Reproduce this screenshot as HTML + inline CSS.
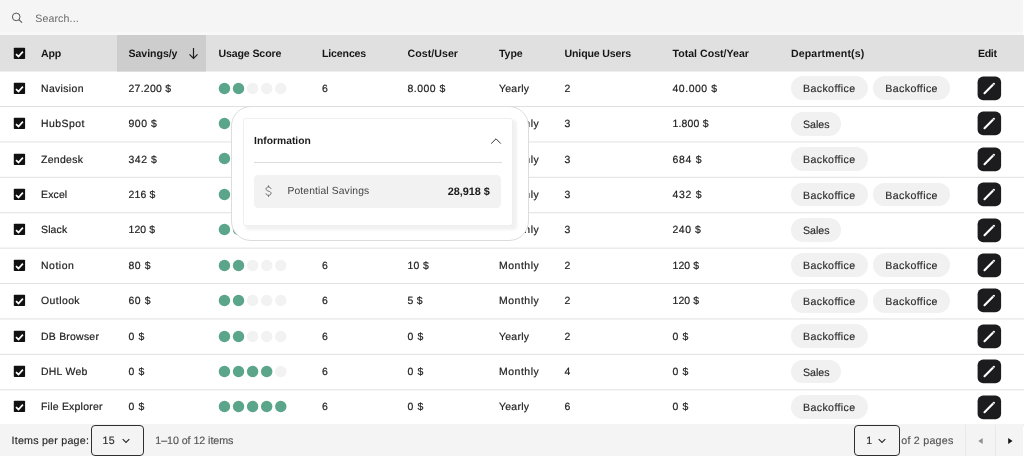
<!DOCTYPE html><html><head><meta charset="utf-8"><title>Apps</title><style>
*{box-sizing:border-box;margin:0;padding:0}
html,body{width:1025px;height:456px;overflow:hidden;background:#fff}
#root{position:absolute;left:0;top:0;width:1025px;height:456px;overflow:hidden;will-change:transform;text-rendering:geometricPrecision;background:#fff}
body{font-family:"Liberation Sans",sans-serif;font-size:10.45px;letter-spacing:0.32px;color:#1c1c1c;position:relative}
.abs{position:absolute;white-space:nowrap}
.search{left:0;top:0;width:1023px;height:35.3px;background:linear-gradient(#f5f5f5 0,#f5f5f5 31.5px,#f8f8f8 32.5px,#f8f8f8 100%)}
.search .ph{left:35.2px;top:1px;height:35.3px;line-height:36.3px;color:#6a6a6a;font-size:10.6px}
.hdr{left:0;top:35.3px;width:1024px;height:35.31px;background:#e0e0e0}
.hdr .sorted{left:117px;top:0;width:89px;height:35.31px;background:#cdcdcd}
.th{top:1px;height:35.31px;line-height:36.31px;font-weight:700;font-size:10.6px;letter-spacing:0.16px;color:#161616}
.row{left:0;width:1025px;height:35.41px;background:transparent}
.td{top:1.1px;height:35.4px;line-height:36px;color:#222;-webkit-text-stroke:0.2px #222}
.cb{left:13px;width:14px;height:14px}
.cb svg{position:absolute;left:0;top:0;width:14px;height:14px}
.dots{left:218px;top:11.9px;height:12px}
.dot{position:absolute;top:0;width:11.6px;height:11.6px;border-radius:50%;background:#f1f1f1}
.dot.on{background:#5aa389}
.tag{top:5.65px;height:23.9px;line-height:27.7px;border-radius:12px;background:#f1f1f1;color:#2b2b2b;-webkit-text-stroke:0.15px #2b2b2b;padding:0 0 0 12px;font-size:10.6px}
.edit{left:977px;top:5.35px;width:26px;height:26px}
.edit svg{position:absolute;left:0;top:0;width:26px;height:26px}
.pag{left:0;top:424px;width:1023px;height:32px;background:#f4f4f4;color:#333}
.pag .t{top:1px;height:32px;line-height:33.4px;font-size:10.7px;letter-spacing:0.3px;color:#2a2a2a;-webkit-text-stroke:0.15px currentColor}
.sel{top:1.4px;height:30.2px;border:1.2px solid #2f2f2f;border-radius:4px;background:#f4f4f4}
.vline{top:1px;width:1px;height:31px;background:#e9e9e9}
.pop{left:231px;top:106px;width:297.5px;height:135.3px;border-radius:20px;background:#fff;border:1.6px solid #dcdcdc}
.card{left:242.5px;top:118px;width:270.5px;height:108px;background:#fff;border-radius:3px;border:1px solid #efefef;box-shadow:3px 3px 2.5px 1px rgba(0,0,0,0.055)}
.card .ttl{left:10.6px;top:14px;line-height:18px;font-weight:700;font-size:10.3px;color:#1a1a1a}
.card .hr{left:10.6px;top:43px;width:248px;height:1px;background:#dcdcdc}
.card .box{left:10.5px;top:56.3px;width:246.8px;height:32.8px;background:#f2f2f2;border-radius:4.5px}
.card .lbl{left:44px;top:56px;height:33px;line-height:33px;font-size:10.3px;color:#444}
.card .val{right:22.1px;top:57px;height:33px;line-height:33px;font-size:10.9px;font-weight:700;color:#1a1a1a}
</style></head><body><div id="root">
<div class="abs search"><svg class="abs" style="left:11px;top:11.8px;width:12px;height:12px" viewBox="0 0 12 12"><circle cx="5.2" cy="4.9" r="3.8" fill="none" stroke="#555" stroke-width="1"/><path d="M7.9 7.6 L11 10.7" stroke="#555" stroke-width="1.1"/></svg><div class="abs ph"><span style="letter-spacing:0.137px">Search...</span></div></div>
<div class="abs" style="left:0;top:71px;width:1024px;height:1px;background:rgba(224,224,224,0.5)"></div><div class="abs" style="left:117px;top:71px;width:89px;height:1px;background:rgba(205,205,205,0.5)"></div>
<div class="abs hdr"><div class="abs sorted"></div>
<div class="abs cb" style="top:11.5px"><svg viewBox="0 0 14 14"><rect x="0.8" y="0.8" width="11.3" height="11.3" rx="0.8" fill="#111"/><path d="M3 7.2 L5.5 9.5 L9.9 4.6" fill="none" stroke="#fff" stroke-width="1.7" stroke-linecap="butt" stroke-linejoin="miter"/></svg></div>
<div class="abs th" style="left:41px"><span style="letter-spacing:-0.197px">App</span></div>
<div class="abs th" style="left:128.5px"><span style="letter-spacing:-0.059px">Savings/y</span></div>
<div class="abs th" style="left:218.4px"><span style="letter-spacing:-0.119px">Usage Score</span></div>
<div class="abs th" style="left:322px"><span style="letter-spacing:-0.158px">Licences</span></div>
<div class="abs th" style="left:407.5px"><span style="letter-spacing:0.057px">Cost/User</span></div>
<div class="abs th" style="left:499px"><span style="letter-spacing:-0.068px">Type</span></div>
<div class="abs th" style="left:564.5px"><span style="letter-spacing:-0.141px">Unique Users</span></div>
<div class="abs th" style="left:672.5px"><span style="letter-spacing:0.011px">Total Cost/Year</span></div>
<div class="abs th" style="left:791px"><span style="letter-spacing:0.118px">Department(s)</span></div>
<div class="abs th" style="left:978px"><span style="letter-spacing:-0.339px">Edit</span></div>
<svg class="abs" style="left:187px;top:11.8px;width:13px;height:13px" viewBox="0 0 13 13"><path d="M6.5 1.1 V11.2 M2.5 7.3 L6.5 11.3 L10.5 7.3" fill="none" stroke="#1e1e1e" stroke-width="1.2"/></svg>
</div>
<div class="abs" style="left:0px;top:106px;width:1024px;height:1px;background:rgba(224,224,224,1.00)"></div>
<div class="abs" style="left:0px;top:141px;width:1024px;height:1px;background:rgba(224,224,224,0.59)"></div><div class="abs" style="left:0px;top:142px;width:1024px;height:1px;background:rgba(224,224,224,0.41)"></div>
<div class="abs" style="left:0px;top:176px;width:1024px;height:1px;background:rgba(224,224,224,0.18)"></div><div class="abs" style="left:0px;top:177px;width:1024px;height:1px;background:rgba(224,224,224,0.82)"></div>
<div class="abs" style="left:0px;top:212px;width:1024px;height:1px;background:rgba(224,224,224,0.77)"></div><div class="abs" style="left:0px;top:213px;width:1024px;height:1px;background:rgba(224,224,224,0.23)"></div>
<div class="abs" style="left:0px;top:247px;width:1024px;height:1px;background:rgba(224,224,224,0.36)"></div><div class="abs" style="left:0px;top:248px;width:1024px;height:1px;background:rgba(224,224,224,0.64)"></div>
<div class="abs" style="left:0px;top:283px;width:1024px;height:1px;background:rgba(224,224,224,0.95)"></div><div class="abs" style="left:0px;top:284px;width:1024px;height:1px;background:rgba(224,224,224,0.05)"></div>
<div class="abs" style="left:0px;top:318px;width:1024px;height:1px;background:rgba(224,224,224,0.54)"></div><div class="abs" style="left:0px;top:319px;width:1024px;height:1px;background:rgba(224,224,224,0.46)"></div>
<div class="abs" style="left:0px;top:353px;width:1024px;height:1px;background:rgba(224,224,224,0.13)"></div><div class="abs" style="left:0px;top:354px;width:1024px;height:1px;background:rgba(224,224,224,0.87)"></div>
<div class="abs" style="left:0px;top:389px;width:1024px;height:1px;background:rgba(224,224,224,0.72)"></div><div class="abs" style="left:0px;top:390px;width:1024px;height:1px;background:rgba(224,224,224,0.28)"></div>
<div class="abs" style="left:0px;top:424px;width:1024px;height:1px;background:rgba(224,224,224,0.31)"></div><div class="abs" style="left:0px;top:425px;width:1024px;height:1px;background:rgba(224,224,224,0.69)"></div>
<div class="abs row" style="top:70.65px">
<div class="abs cb" style="top:11.15px"><svg viewBox="0 0 14 14"><rect x="0.8" y="0.8" width="11.3" height="11.3" rx="0.8" fill="#111"/><path d="M3 7.2 L5.5 9.5 L9.9 4.6" fill="none" stroke="#fff" stroke-width="1.7" stroke-linecap="butt" stroke-linejoin="miter"/></svg></div>
<div class="abs td" style="left:41px"><span style="letter-spacing:0.353px">Navision</span></div>
<div class="abs td" style="left:128.5px"><span style="letter-spacing:0.266px">27.200 $</span></div>
<svg class="abs" style="left:218px;top:11px;width:72px;height:14px" viewBox="0 0 72 14"><circle cx="6.45" cy="6.55" r="5.7" fill="#5ba58a"/><circle cx="20.53" cy="6.55" r="5.7" fill="#5ba58a"/><circle cx="34.61" cy="6.55" r="5.7" fill="#f2f2f2"/><circle cx="48.69" cy="6.55" r="5.7" fill="#f2f2f2"/><circle cx="62.77" cy="6.55" r="5.7" fill="#f2f2f2"/></svg>
<div class="abs td" style="left:322px"><span style="letter-spacing:0.320px">6</span></div>
<div class="abs td" style="left:407.5px"><span style="letter-spacing:0.487px">8.000 $</span></div>
<div class="abs td" style="left:499px"><span style="letter-spacing:0.272px">Yearly</span></div>
<div class="abs td" style="left:564.5px"><span style="letter-spacing:0.320px">2</span></div>
<div class="abs td" style="left:672.5px"><span style="letter-spacing:0.551px">40.000 $</span></div>
<div class="abs tag" style="left:791px;width:76.9px"><span style="letter-spacing:0.390px">Backoffice</span></div>
<div class="abs tag" style="left:873.3px;width:76.9px"><span style="letter-spacing:0.390px">Backoffice</span></div>
<div class="abs edit"><svg viewBox="0 0 26 26"><rect x="0.6" y="0.55" width="23.5" height="23.7" rx="5.6" fill="#1c1c1e"/><path d="M7.5 17.25 L16.9 7.85" fill="none" stroke="#fff" stroke-width="2.1" stroke-linecap="round"/><path d="M15.2 7.45 L17.4 9.65" stroke="#1c1c1e" stroke-width="0.5"/></svg></div>
</div>
<div class="abs row" style="top:106.06px">
<div class="abs cb" style="top:11.15px"><svg viewBox="0 0 14 14"><rect x="0.8" y="0.8" width="11.3" height="11.3" rx="0.8" fill="#111"/><path d="M3 7.2 L5.5 9.5 L9.9 4.6" fill="none" stroke="#fff" stroke-width="1.7" stroke-linecap="butt" stroke-linejoin="miter"/></svg></div>
<div class="abs td" style="left:41px"><span style="letter-spacing:0.446px">HubSpot</span></div>
<div class="abs td" style="left:128.5px"><span style="letter-spacing:0.569px">900 $</span></div>
<svg class="abs" style="left:218px;top:11px;width:72px;height:14px" viewBox="0 0 72 14"><circle cx="6.45" cy="6.55" r="5.7" fill="#5ba58a"/><circle cx="20.53" cy="6.55" r="5.7" fill="#5ba58a"/><circle cx="34.61" cy="6.55" r="5.7" fill="#f2f2f2"/><circle cx="48.69" cy="6.55" r="5.7" fill="#f2f2f2"/><circle cx="62.77" cy="6.55" r="5.7" fill="#f2f2f2"/></svg>
<div class="abs td" style="left:322px"><span style="letter-spacing:0.320px">6</span></div>
<div class="abs td" style="left:407.5px"><span style="letter-spacing:0.320px">1 $</span></div>
<div class="abs td" style="left:499px"><span style="letter-spacing:0.542px">Monthly</span></div>
<div class="abs td" style="left:564.5px"><span style="letter-spacing:0.320px">3</span></div>
<div class="abs td" style="left:672.5px"><span style="letter-spacing:0.195px">1.800 $</span></div>
<div class="abs tag" style="left:791px;width:49.5px"><span style="letter-spacing:0.000px">Sales</span></div>
<div class="abs edit"><svg viewBox="0 0 26 26"><rect x="0.6" y="0.55" width="23.5" height="23.7" rx="5.6" fill="#1c1c1e"/><path d="M7.5 17.25 L16.9 7.85" fill="none" stroke="#fff" stroke-width="2.1" stroke-linecap="round"/><path d="M15.2 7.45 L17.4 9.65" stroke="#1c1c1e" stroke-width="0.5"/></svg></div>
</div>
<div class="abs row" style="top:141.47px">
<div class="abs cb" style="top:11.15px"><svg viewBox="0 0 14 14"><rect x="0.8" y="0.8" width="11.3" height="11.3" rx="0.8" fill="#111"/><path d="M3 7.2 L5.5 9.5 L9.9 4.6" fill="none" stroke="#fff" stroke-width="1.7" stroke-linecap="butt" stroke-linejoin="miter"/></svg></div>
<div class="abs td" style="left:41px"><span style="letter-spacing:0.326px">Zendesk</span></div>
<div class="abs td" style="left:128.5px"><span style="letter-spacing:0.569px">342 $</span></div>
<svg class="abs" style="left:218px;top:11px;width:72px;height:14px" viewBox="0 0 72 14"><circle cx="6.45" cy="6.55" r="5.7" fill="#5ba58a"/><circle cx="20.53" cy="6.55" r="5.7" fill="#5ba58a"/><circle cx="34.61" cy="6.55" r="5.7" fill="#f2f2f2"/><circle cx="48.69" cy="6.55" r="5.7" fill="#f2f2f2"/><circle cx="62.77" cy="6.55" r="5.7" fill="#f2f2f2"/></svg>
<div class="abs td" style="left:322px"><span style="letter-spacing:0.320px">6</span></div>
<div class="abs td" style="left:407.5px"><span style="letter-spacing:0.320px">1 $</span></div>
<div class="abs td" style="left:499px"><span style="letter-spacing:0.542px">Monthly</span></div>
<div class="abs td" style="left:564.5px"><span style="letter-spacing:0.320px">3</span></div>
<div class="abs td" style="left:672.5px"><span style="letter-spacing:0.719px">684 $</span></div>
<div class="abs tag" style="left:791px;width:76.9px"><span style="letter-spacing:0.390px">Backoffice</span></div>
<div class="abs edit"><svg viewBox="0 0 26 26"><rect x="0.6" y="0.55" width="23.5" height="23.7" rx="5.6" fill="#1c1c1e"/><path d="M7.5 17.25 L16.9 7.85" fill="none" stroke="#fff" stroke-width="2.1" stroke-linecap="round"/><path d="M15.2 7.45 L17.4 9.65" stroke="#1c1c1e" stroke-width="0.5"/></svg></div>
</div>
<div class="abs row" style="top:176.88px">
<div class="abs cb" style="top:11.15px"><svg viewBox="0 0 14 14"><rect x="0.8" y="0.8" width="11.3" height="11.3" rx="0.8" fill="#111"/><path d="M3 7.2 L5.5 9.5 L9.9 4.6" fill="none" stroke="#fff" stroke-width="1.7" stroke-linecap="butt" stroke-linejoin="miter"/></svg></div>
<div class="abs td" style="left:41px"><span style="letter-spacing:0.167px">Excel</span></div>
<div class="abs td" style="left:128.5px"><span style="letter-spacing:0.169px">216 $</span></div>
<svg class="abs" style="left:218px;top:11px;width:72px;height:14px" viewBox="0 0 72 14"><circle cx="6.45" cy="6.55" r="5.7" fill="#5ba58a"/><circle cx="20.53" cy="6.55" r="5.7" fill="#5ba58a"/><circle cx="34.61" cy="6.55" r="5.7" fill="#f2f2f2"/><circle cx="48.69" cy="6.55" r="5.7" fill="#f2f2f2"/><circle cx="62.77" cy="6.55" r="5.7" fill="#f2f2f2"/></svg>
<div class="abs td" style="left:322px"><span style="letter-spacing:0.320px">6</span></div>
<div class="abs td" style="left:407.5px"><span style="letter-spacing:0.320px">1 $</span></div>
<div class="abs td" style="left:499px"><span style="letter-spacing:0.542px">Monthly</span></div>
<div class="abs td" style="left:564.5px"><span style="letter-spacing:0.320px">3</span></div>
<div class="abs td" style="left:672.5px"><span style="letter-spacing:0.719px">432 $</span></div>
<div class="abs tag" style="left:791px;width:76.9px"><span style="letter-spacing:0.390px">Backoffice</span></div>
<div class="abs tag" style="left:873.3px;width:76.9px"><span style="letter-spacing:0.390px">Backoffice</span></div>
<div class="abs edit"><svg viewBox="0 0 26 26"><rect x="0.6" y="0.55" width="23.5" height="23.7" rx="5.6" fill="#1c1c1e"/><path d="M7.5 17.25 L16.9 7.85" fill="none" stroke="#fff" stroke-width="2.1" stroke-linecap="round"/><path d="M15.2 7.45 L17.4 9.65" stroke="#1c1c1e" stroke-width="0.5"/></svg></div>
</div>
<div class="abs row" style="top:212.29px">
<div class="abs cb" style="top:11.15px"><svg viewBox="0 0 14 14"><rect x="0.8" y="0.8" width="11.3" height="11.3" rx="0.8" fill="#111"/><path d="M3 7.2 L5.5 9.5 L9.9 4.6" fill="none" stroke="#fff" stroke-width="1.7" stroke-linecap="butt" stroke-linejoin="miter"/></svg></div>
<div class="abs td" style="left:41px"><span style="letter-spacing:0.167px">Slack</span></div>
<div class="abs td" style="left:128.5px"><span style="letter-spacing:0.094px">120 $</span></div>
<svg class="abs" style="left:218px;top:11px;width:72px;height:14px" viewBox="0 0 72 14"><circle cx="6.45" cy="6.55" r="5.7" fill="#5ba58a"/><circle cx="20.53" cy="6.55" r="5.7" fill="#5ba58a"/><circle cx="34.61" cy="6.55" r="5.7" fill="#f2f2f2"/><circle cx="48.69" cy="6.55" r="5.7" fill="#f2f2f2"/><circle cx="62.77" cy="6.55" r="5.7" fill="#f2f2f2"/></svg>
<div class="abs td" style="left:322px"><span style="letter-spacing:0.320px">6</span></div>
<div class="abs td" style="left:407.5px"><span style="letter-spacing:0.320px">1 $</span></div>
<div class="abs td" style="left:499px"><span style="letter-spacing:0.542px">Monthly</span></div>
<div class="abs td" style="left:564.5px"><span style="letter-spacing:0.320px">3</span></div>
<div class="abs td" style="left:672.5px"><span style="letter-spacing:0.569px">240 $</span></div>
<div class="abs tag" style="left:791px;width:49.5px"><span style="letter-spacing:0.000px">Sales</span></div>
<div class="abs edit"><svg viewBox="0 0 26 26"><rect x="0.6" y="0.55" width="23.5" height="23.7" rx="5.6" fill="#1c1c1e"/><path d="M7.5 17.25 L16.9 7.85" fill="none" stroke="#fff" stroke-width="2.1" stroke-linecap="round"/><path d="M15.2 7.45 L17.4 9.65" stroke="#1c1c1e" stroke-width="0.5"/></svg></div>
</div>
<div class="abs row" style="top:247.70px">
<div class="abs cb" style="top:11.15px"><svg viewBox="0 0 14 14"><rect x="0.8" y="0.8" width="11.3" height="11.3" rx="0.8" fill="#111"/><path d="M3 7.2 L5.5 9.5 L9.9 4.6" fill="none" stroke="#fff" stroke-width="1.7" stroke-linecap="butt" stroke-linejoin="miter"/></svg></div>
<div class="abs td" style="left:41px"><span style="letter-spacing:0.526px">Notion</span></div>
<div class="abs td" style="left:128.5px"><span style="letter-spacing:0.557px">80 $</span></div>
<svg class="abs" style="left:218px;top:11px;width:72px;height:14px" viewBox="0 0 72 14"><circle cx="6.45" cy="6.55" r="5.7" fill="#5ba58a"/><circle cx="20.53" cy="6.55" r="5.7" fill="#5ba58a"/><circle cx="34.61" cy="6.55" r="5.7" fill="#f2f2f2"/><circle cx="48.69" cy="6.55" r="5.7" fill="#f2f2f2"/><circle cx="62.77" cy="6.55" r="5.7" fill="#f2f2f2"/></svg>
<div class="abs td" style="left:322px"><span style="letter-spacing:0.320px">6</span></div>
<div class="abs td" style="left:407.5px"><span style="letter-spacing:0.320px">10 $</span></div>
<div class="abs td" style="left:499px"><span style="letter-spacing:0.542px">Monthly</span></div>
<div class="abs td" style="left:564.5px"><span style="letter-spacing:0.320px">2</span></div>
<div class="abs td" style="left:672.5px"><span style="letter-spacing:0.094px">120 $</span></div>
<div class="abs tag" style="left:791px;width:76.9px"><span style="letter-spacing:0.390px">Backoffice</span></div>
<div class="abs tag" style="left:873.3px;width:76.9px"><span style="letter-spacing:0.390px">Backoffice</span></div>
<div class="abs edit"><svg viewBox="0 0 26 26"><rect x="0.6" y="0.55" width="23.5" height="23.7" rx="5.6" fill="#1c1c1e"/><path d="M7.5 17.25 L16.9 7.85" fill="none" stroke="#fff" stroke-width="2.1" stroke-linecap="round"/><path d="M15.2 7.45 L17.4 9.65" stroke="#1c1c1e" stroke-width="0.5"/></svg></div>
</div>
<div class="abs row" style="top:283.11px">
<div class="abs cb" style="top:11.15px"><svg viewBox="0 0 14 14"><rect x="0.8" y="0.8" width="11.3" height="11.3" rx="0.8" fill="#111"/><path d="M3 7.2 L5.5 9.5 L9.9 4.6" fill="none" stroke="#fff" stroke-width="1.7" stroke-linecap="butt" stroke-linejoin="miter"/></svg></div>
<div class="abs td" style="left:41px"><span style="letter-spacing:0.436px">Outlook</span></div>
<div class="abs td" style="left:128.5px"><span style="letter-spacing:0.557px">60 $</span></div>
<svg class="abs" style="left:218px;top:11px;width:72px;height:14px" viewBox="0 0 72 14"><circle cx="6.45" cy="6.55" r="5.7" fill="#5ba58a"/><circle cx="20.53" cy="6.55" r="5.7" fill="#5ba58a"/><circle cx="34.61" cy="6.55" r="5.7" fill="#f2f2f2"/><circle cx="48.69" cy="6.55" r="5.7" fill="#f2f2f2"/><circle cx="62.77" cy="6.55" r="5.7" fill="#f2f2f2"/></svg>
<div class="abs td" style="left:322px"><span style="letter-spacing:0.320px">6</span></div>
<div class="abs td" style="left:407.5px"><span style="letter-spacing:0.320px">5 $</span></div>
<div class="abs td" style="left:499px"><span style="letter-spacing:0.542px">Monthly</span></div>
<div class="abs td" style="left:564.5px"><span style="letter-spacing:0.320px">2</span></div>
<div class="abs td" style="left:672.5px"><span style="letter-spacing:0.094px">120 $</span></div>
<div class="abs tag" style="left:791px;width:76.9px"><span style="letter-spacing:0.390px">Backoffice</span></div>
<div class="abs tag" style="left:873.3px;width:76.9px"><span style="letter-spacing:0.390px">Backoffice</span></div>
<div class="abs edit"><svg viewBox="0 0 26 26"><rect x="0.6" y="0.55" width="23.5" height="23.7" rx="5.6" fill="#1c1c1e"/><path d="M7.5 17.25 L16.9 7.85" fill="none" stroke="#fff" stroke-width="2.1" stroke-linecap="round"/><path d="M15.2 7.45 L17.4 9.65" stroke="#1c1c1e" stroke-width="0.5"/></svg></div>
</div>
<div class="abs row" style="top:318.52px">
<div class="abs cb" style="top:11.15px"><svg viewBox="0 0 14 14"><rect x="0.8" y="0.8" width="11.3" height="11.3" rx="0.8" fill="#111"/><path d="M3 7.2 L5.5 9.5 L9.9 4.6" fill="none" stroke="#fff" stroke-width="1.7" stroke-linecap="butt" stroke-linejoin="miter"/></svg></div>
<div class="abs td" style="left:41px"><span style="letter-spacing:0.246px">DB Browser</span></div>
<div class="abs td" style="left:128.5px"><span style="letter-spacing:0.642px">0 $</span></div>
<svg class="abs" style="left:218px;top:11px;width:72px;height:14px" viewBox="0 0 72 14"><circle cx="6.45" cy="6.55" r="5.7" fill="#5ba58a"/><circle cx="20.53" cy="6.55" r="5.7" fill="#5ba58a"/><circle cx="34.61" cy="6.55" r="5.7" fill="#f2f2f2"/><circle cx="48.69" cy="6.55" r="5.7" fill="#f2f2f2"/><circle cx="62.77" cy="6.55" r="5.7" fill="#f2f2f2"/></svg>
<div class="abs td" style="left:322px"><span style="letter-spacing:0.320px">6</span></div>
<div class="abs td" style="left:407.5px"><span style="letter-spacing:0.642px">0 $</span></div>
<div class="abs td" style="left:499px"><span style="letter-spacing:0.272px">Yearly</span></div>
<div class="abs td" style="left:564.5px"><span style="letter-spacing:0.320px">2</span></div>
<div class="abs td" style="left:672.5px"><span style="letter-spacing:0.642px">0 $</span></div>
<div class="abs tag" style="left:791px;width:76.9px"><span style="letter-spacing:0.390px">Backoffice</span></div>
<div class="abs edit"><svg viewBox="0 0 26 26"><rect x="0.6" y="0.55" width="23.5" height="23.7" rx="5.6" fill="#1c1c1e"/><path d="M7.5 17.25 L16.9 7.85" fill="none" stroke="#fff" stroke-width="2.1" stroke-linecap="round"/><path d="M15.2 7.45 L17.4 9.65" stroke="#1c1c1e" stroke-width="0.5"/></svg></div>
</div>
<div class="abs row" style="top:353.93px">
<div class="abs cb" style="top:11.15px"><svg viewBox="0 0 14 14"><rect x="0.8" y="0.8" width="11.3" height="11.3" rx="0.8" fill="#111"/><path d="M3 7.2 L5.5 9.5 L9.9 4.6" fill="none" stroke="#fff" stroke-width="1.7" stroke-linecap="butt" stroke-linejoin="miter"/></svg></div>
<div class="abs td" style="left:41px"><span style="letter-spacing:0.271px">DHL Web</span></div>
<div class="abs td" style="left:128.5px"><span style="letter-spacing:0.642px">0 $</span></div>
<svg class="abs" style="left:218px;top:11px;width:72px;height:14px" viewBox="0 0 72 14"><circle cx="6.45" cy="6.55" r="5.7" fill="#5ba58a"/><circle cx="20.53" cy="6.55" r="5.7" fill="#5ba58a"/><circle cx="34.61" cy="6.55" r="5.7" fill="#5ba58a"/><circle cx="48.69" cy="6.55" r="5.7" fill="#5ba58a"/><circle cx="62.77" cy="6.55" r="5.7" fill="#f2f2f2"/></svg>
<div class="abs td" style="left:322px"><span style="letter-spacing:0.320px">6</span></div>
<div class="abs td" style="left:407.5px"><span style="letter-spacing:0.642px">0 $</span></div>
<div class="abs td" style="left:499px"><span style="letter-spacing:0.542px">Monthly</span></div>
<div class="abs td" style="left:564.5px"><span style="letter-spacing:0.320px">4</span></div>
<div class="abs td" style="left:672.5px"><span style="letter-spacing:0.642px">0 $</span></div>
<div class="abs tag" style="left:791px;width:49.5px"><span style="letter-spacing:0.000px">Sales</span></div>
<div class="abs edit"><svg viewBox="0 0 26 26"><rect x="0.6" y="0.55" width="23.5" height="23.7" rx="5.6" fill="#1c1c1e"/><path d="M7.5 17.25 L16.9 7.85" fill="none" stroke="#fff" stroke-width="2.1" stroke-linecap="round"/><path d="M15.2 7.45 L17.4 9.65" stroke="#1c1c1e" stroke-width="0.5"/></svg></div>
</div>
<div class="abs row" style="top:389.34px">
<div class="abs cb" style="top:11.15px"><svg viewBox="0 0 14 14"><rect x="0.8" y="0.8" width="11.3" height="11.3" rx="0.8" fill="#111"/><path d="M3 7.2 L5.5 9.5 L9.9 4.6" fill="none" stroke="#fff" stroke-width="1.7" stroke-linecap="butt" stroke-linejoin="miter"/></svg></div>
<div class="abs td" style="left:41px"><span style="letter-spacing:0.234px">File Explorer</span></div>
<div class="abs td" style="left:128.5px"><span style="letter-spacing:0.642px">0 $</span></div>
<svg class="abs" style="left:218px;top:11px;width:72px;height:14px" viewBox="0 0 72 14"><circle cx="6.45" cy="6.55" r="5.7" fill="#5ba58a"/><circle cx="20.53" cy="6.55" r="5.7" fill="#5ba58a"/><circle cx="34.61" cy="6.55" r="5.7" fill="#5ba58a"/><circle cx="48.69" cy="6.55" r="5.7" fill="#5ba58a"/><circle cx="62.77" cy="6.55" r="5.7" fill="#5ba58a"/></svg>
<div class="abs td" style="left:322px"><span style="letter-spacing:0.320px">6</span></div>
<div class="abs td" style="left:407.5px"><span style="letter-spacing:0.642px">0 $</span></div>
<div class="abs td" style="left:499px"><span style="letter-spacing:0.272px">Yearly</span></div>
<div class="abs td" style="left:564.5px"><span style="letter-spacing:0.320px">6</span></div>
<div class="abs td" style="left:672.5px"><span style="letter-spacing:0.642px">0 $</span></div>
<div class="abs tag" style="left:791px;width:76.9px"><span style="letter-spacing:0.390px">Backoffice</span></div>
<div class="abs edit"><svg viewBox="0 0 26 26"><rect x="0.6" y="0.55" width="23.5" height="23.7" rx="5.6" fill="#1c1c1e"/><path d="M7.5 17.25 L16.9 7.85" fill="none" stroke="#fff" stroke-width="2.1" stroke-linecap="round"/><path d="M15.2 7.45 L17.4 9.65" stroke="#1c1c1e" stroke-width="0.5"/></svg></div>
</div>
<div class="abs pag">
<div class="abs t" style="left:11.5px"><span style="letter-spacing:0.224px">Items per page:</span></div>
<div class="abs sel" style="left:90.6px;width:53.3px"></div>
<div class="abs t" style="left:102.6px">15</div>
<svg class="abs" style="left:121px;top:12.2px;width:10px;height:10px" viewBox="0 0 10 10"><path d="M1.7 3.2 L5 6.5 L8.3 3.2" fill="none" stroke="#2b2b2b" stroke-width="1.15"/></svg>
<div class="abs t" style="left:155.3px;color:#555"><span style="letter-spacing:-0.062px">1–10 of 12 items</span></div>
<div class="abs sel" style="left:853.8px;width:46.4px"></div>
<div class="abs t" style="left:866.3px">1</div>
<svg class="abs" style="left:877.3px;top:12.2px;width:10px;height:10px" viewBox="0 0 10 10"><path d="M1.7 3.2 L5 6.5 L8.3 3.2" fill="none" stroke="#2b2b2b" stroke-width="1.15"/></svg>
<div class="abs t" style="left:901.3px;color:#555"><span style="letter-spacing:0.231px">of 2 pages</span></div>
<div class="abs vline" style="left:965.3px"></div><div class="abs vline" style="left:995.3px"></div>
<svg class="abs" style="left:975.8px;top:11.7px;width:10px;height:10px" viewBox="0 0 10 10"><path d="M6.7 2.0 L2.3 5 L6.7 8.0 Z" fill="#8f8f8f"/></svg>
<svg class="abs" style="left:1004.8px;top:11.8px;width:10px;height:10px" viewBox="0 0 10 10"><path d="M3.2 2.0 L7.5 5 L3.2 8.0 Z" fill="#161616"/></svg>
</div>
<div class="abs pop"></div>
<div class="abs card"><div class="abs ttl"><span style="letter-spacing:0.006px">Information</span></div>
<svg class="abs" style="left:246.3px;top:17.5px;width:12px;height:8px" viewBox="0 0 12 8"><path d="M1.2 6.6 L6 1.8 L10.8 6.6" fill="none" stroke="#333" stroke-width="1"/></svg>
<div class="abs hr"></div><div class="abs box"></div>
<svg class="abs" style="left:21.1px;top:65.8px;width:7px;height:12.25px" viewBox="0 0 8 14"><path d="M4 0.4 V2.3 M4 11.7 V13.6 M6.9 4.4 C6.6 3.1 5.5 2.3 4 2.3 C2.4 2.3 1.2 3.2 1.2 4.6 C1.2 6 2.4 6.5 4 7 C5.7 7.5 6.9 8.1 6.9 9.5 C6.9 10.9 5.7 11.7 4 11.7 C2.4 11.7 1.3 10.9 1 9.6" fill="none" stroke="#666" stroke-width="1.1"/></svg>
<div class="abs lbl"><span style="letter-spacing:0.133px">Potential Savings</span></div><div class="abs val"><span style="letter-spacing:-0.015px">28,918 $</span></div></div>
</div></body></html>
